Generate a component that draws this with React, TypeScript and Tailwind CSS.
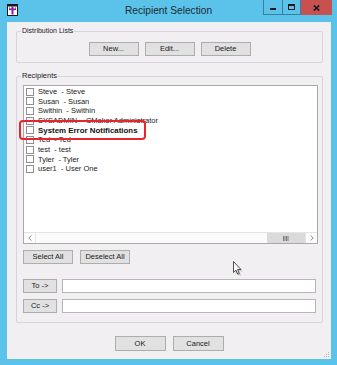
import React from "react";

const items: { text: string; bold?: boolean }[] = [
  { text: "Steve  - Steve" },
  { text: "Susan  - Susan" },
  { text: "Swithin  - Swithin" },
  { text: "SYSADMIN  - CMaker Administrator" },
  { text: "System Error Notifications", bold: true },
  { text: "Ted  - Ted" },
  { text: "test  - test" },
  { text: "Tyler  - Tyler" },
  { text: "user1  - User One" },
];

function Btn({ label, w, h = "h-[14px]" }: { label: string; w: string; h?: string }) {
  return (
    <div
      className={`${w} ${h} flex items-center justify-center border border-[#adadad] bg-[#e1e1e1] text-[7.5px] leading-none text-[#1a1a1a]`}
    >
      {label}
    </div>
  );
}

export default function App() {
  return (
    <div className="relative w-[337px] h-[365px] bg-[#5bc3e9] flex flex-col overflow-hidden [font-family:'Liberation_Sans',Arial,sans-serif]">
      {/* Title bar */}
      <div className="h-[22px] grid grid-cols-[1fr_auto_1fr] items-start">
        <div className="pl-[7px] pt-[4px]">
          <svg width="11" height="12" viewBox="0 0 11 12">
            <rect x="0.5" y="0.5" width="10" height="11" fill="#ffffff" stroke="#1a1a1a" />
            <rect x="1" y="1" width="9" height="1.5" fill="#1a1a1a" />
            <rect x="4.5" y="2.5" width="2" height="8" fill="#8a1f9e" />
            <rect x="2" y="4.5" width="7" height="1.6" fill="#8a1f9e" />
            <rect x="2" y="3.5" width="1" height="1" fill="#8a1f9e" />
            <rect x="8" y="3.5" width="1" height="1" fill="#8a1f9e" />
          </svg>
        </div>
        <div className="pt-[4px] text-[10.2px] leading-[13px] text-[#1b2a33]">Recipient Selection</div>
        <div className="flex justify-end pr-[5px]">
          <div className="w-[19px] h-[15px] border-l border-b border-[#3a7f9b] flex items-center justify-center">
            <div className="w-[6px] h-[2px] bg-[#1a1a1a] mt-[3px]" />
          </div>
          <div className="w-[18px] h-[15px] border-l border-b border-[#3a7f9b] flex items-center justify-center">
            <div className="w-[7px] h-[6px] border-[1.5px] border-[#1a1a1a] border-t-2" />
          </div>
          <div className="w-[32px] h-[15px] bg-[#c75050] border-l border-[#3a7f9b] flex items-center justify-center">
            <svg width="7" height="6" viewBox="0 0 7 6">
              <path d="M0.8 0.5 L6.2 5.5 M6.2 0.5 L0.8 5.5" stroke="#1a1a1a" strokeWidth="1.7" />
            </svg>
          </div>
        </div>
      </div>

      {/* Client area */}
      <div className="relative ml-[7px] mr-[6px] mb-[6px] flex-1 bg-[#f2eff3] pl-[9px] pr-[8px] flex flex-col">
        {/* Distribution Lists */}
        <div className="relative mt-[9px] h-[32px] border border-[#d6d4da] rounded-[2px] pt-[10px] flex justify-center gap-[6px]">
          <div className="absolute left-[4px] top-[-6px] px-[1px] bg-[#f2eff3] text-[7px] leading-[10px] text-[#1a1a1a]">
            Distribution Lists
          </div>
          <Btn label="New..." w="w-[50px]" />
          <Btn label="Edit..." w="w-[50px]" />
          <Btn label="Delete" w="w-[50px]" />
        </div>

        {/* Recipients */}
        <div className="relative mt-[13px] h-[247px] border border-[#d6d4da] rounded-[2px] pt-[8px] pl-[6px] pr-[4px] flex flex-col">
          <div className="absolute left-[4px] top-[-6px] px-[1px] bg-[#f2eff3] text-[7.5px] leading-[10px] text-[#1a1a1a]">
            Recipients
          </div>

          {/* List box */}
          <div className="w-[295px] h-[159px] border border-[#a9a9a9] bg-white flex flex-col">
            <div className="flex-1 pt-[1px] pl-[1px]">
              {items.map((it) => (
                <div key={it.text} className="h-[9.66px] flex items-center">
                  <div className="ml-[1px] w-[8px] h-[8px] border border-[#8f8f8f] bg-white shrink-0" />
                  <span
                    className={`ml-[4px] whitespace-pre leading-none ${
                      it.bold ? "font-bold text-[7.9px] text-[#111]" : "text-[7.5px] text-[#222]"
                    }`}
                  >
                    {it.text}
                  </span>
                </div>
              ))}
            </div>
            {/* horizontal scrollbar */}
            <div className="h-[11px] border-t border-[#e3e3e3] bg-[#fbfbfb] flex">
              <div className="w-[12px] border-r border-[#e6e6e6] flex items-center justify-center">
                <svg width="4" height="6" viewBox="0 0 4 6">
                  <path d="M3.3 0.5 L0.8 3 L3.3 5.5" stroke="#8a8a8a" strokeWidth="1" fill="none" />
                </svg>
              </div>
              <div className="flex-1" />
              <div className="w-[38px] bg-[#dadada] flex items-center justify-center">
                <svg width="6" height="5" viewBox="0 0 6 5">
                  <path d="M0.5 0 V5 M2 0 V5 M3.5 0 V5 M5 0 V5" stroke="#6f6f6f" strokeWidth="0.9" />
                </svg>
              </div>
              <div className="w-[12px] border-l border-[#e6e6e6] flex items-center justify-center">
                <svg width="4" height="6" viewBox="0 0 4 6">
                  <path d="M0.7 0.5 L3.2 3 L0.7 5.5" stroke="#8a8a8a" strokeWidth="1" fill="none" />
                </svg>
              </div>
            </div>
          </div>

          {/* Select buttons */}
          <div className="mt-[6px] flex gap-[7px]">
            <Btn label="Select All" w="w-[50px]" />
            <Btn label="Deselect All" w="w-[50px]" />
          </div>

          {/* To / Cc */}
          <div className="mt-[15px] flex gap-[5px]">
            <Btn label="To ->" w="w-[34px]" />
            <div className="w-[254px] h-[14px] border border-[#b5b5b5] bg-white" />
          </div>
          <div className="mt-[6px] flex gap-[5px]">
            <Btn label="Cc ->" w="w-[34px]" />
            <div className="w-[254px] h-[14px] border border-[#b5b5b5] bg-white" />
          </div>

          {/* Highlight */}
          <div className="absolute left-[2px] top-[43px] w-[127px] h-[20px] border-[2.5px] border-[#e8242c] rounded-[4px]" />
        </div>

        {/* OK / Cancel */}
        <div className="mt-[13px] flex justify-center gap-[7px] pr-[1px]">
          <Btn label="OK" w="w-[51px]" h="h-[15px]" />
          <Btn label="Cancel" w="w-[51px]" h="h-[15px]" />
        </div>

        {/* resize grip */}
        <svg className="absolute right-[1px] bottom-[1px]" width="6" height="6" viewBox="0 0 6 6">
          <rect x="4" y="0" width="1" height="1" fill="#b8b8b8" />
          <rect x="2" y="2" width="1" height="1" fill="#b8b8b8" />
          <rect x="4" y="2" width="1" height="1" fill="#b8b8b8" />
          <rect x="0" y="4" width="1" height="1" fill="#b8b8b8" />
          <rect x="2" y="4" width="1" height="1" fill="#b8b8b8" />
          <rect x="4" y="4" width="1" height="1" fill="#b8b8b8" />
        </svg>
      </div>

      {/* mouse cursor */}
      <svg className="absolute left-[233px] top-[261px]" width="11" height="16" viewBox="0 0 11 16">
        <path d="M1.5 1.5 L1.5 12.5 L4 10.2 L5.8 14.3 L7.3 13.6 L5.6 9.6 L9 9.6 Z" fill="#9a9a9a" opacity="0.35" transform="translate(1 1)" />
        <path d="M0.5 0.5 L0.5 11.5 L3 9.2 L4.8 13.3 L6.3 12.6 L4.6 8.6 L8 8.6 Z" fill="#ffffff" stroke="#222" strokeWidth="0.8" />
      </svg>
    </div>
  );
}
